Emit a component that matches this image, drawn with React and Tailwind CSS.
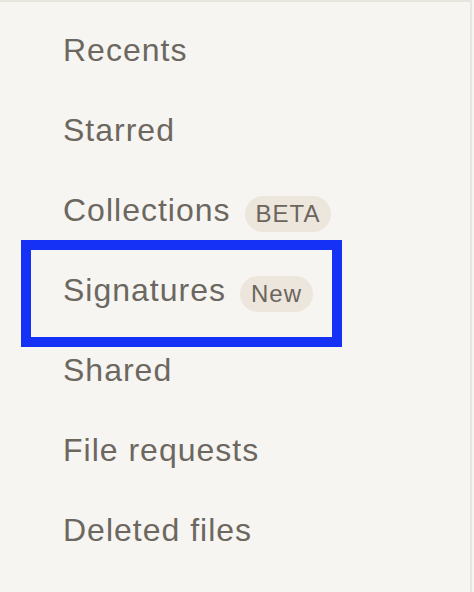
import React from "react";

const items = [
  { label: "Recents" },
  { label: "Starred" },
  { label: "Collections", badge: "BETA" },
  { label: "Signatures", badge: "New", highlight: true },
  { label: "Shared" },
  { label: "File requests" },
  { label: "Deleted files" },
];

function Badge({ text }) {
  return (
    <span className="ml-[14px] mt-[7px] flex h-[36px] items-center rounded-full bg-[#ede6dd] px-[11px] text-[24px] leading-none tracking-[1px] text-[#6b655e]">
      {text}
    </span>
  );
}

function NavRow({ item }) {
  return (
    <li className="relative flex h-[80px] items-center pl-[63px]">
      <span className="text-[32px] leading-none tracking-[1px] text-[#6c675f]">
        {item.label}
      </span>
      {item.badge && <Badge text={item.badge} />}
      {item.highlight && (
        <div className="pointer-events-none absolute left-[21px] top-[-10px] h-[107px] w-[321px] border-[10px] border-[#1431f5]" />
      )}
    </li>
  );
}

export default function App() {
  return (
    <div
      className="h-[592px] w-[474px] overflow-hidden bg-[#f7f5f2]"
      style={{ fontFamily: '"Liberation Sans", Arial, sans-serif' }}
    >
      <div className="h-full w-[472px] border-r-2 border-t-2 border-[#e8e4de] pt-[8px]">
        <ul className="flex flex-col">
          {items.map((item) => (
            <NavRow key={item.label} item={item} />
          ))}
        </ul>
      </div>
    </div>
  );
}
